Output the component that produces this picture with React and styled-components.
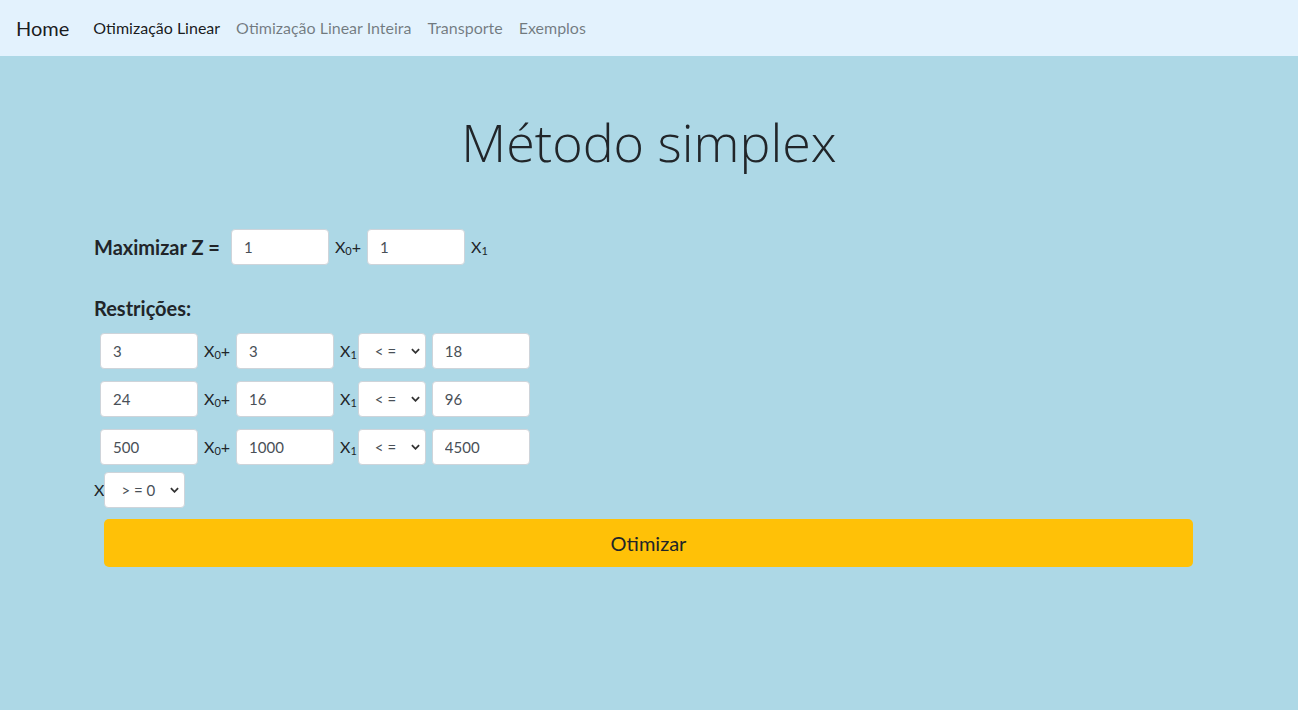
import React from 'react';
import styled, { createGlobalStyle } from 'styled-components';

const GlobalStyle = createGlobalStyle`
  html, body {
    margin: 0;
    padding: 0;
  }
  body {
    background: #add8e6;
    font-family: Lato, "Open Sans", sans-serif;
    font-size: 16px;
    line-height: 1.5;
    color: #212529;
  }
  * {
    box-sizing: border-box;
  }
`;

const Navbar = styled.nav`
  display: flex;
  align-items: center;
  height: 56px;
  padding: 0 16px;
  background: #e3f2fd;
`;

const Brand = styled.a`
  font-size: 20px;
  color: rgba(0, 0, 0, 0.9);
  margin-right: 16px;
  text-decoration: none;
`;

const NavLink = styled.a`
  padding: 8px;
  color: ${(p) => (p.$active ? 'rgba(0, 0, 0, 0.9)' : 'rgba(0, 0, 0, 0.5)')};
  text-decoration: none;
`;

const Container = styled.main`
  width: 1110px;
  margin: 0 auto;
`;

const Title = styled.h1`
  font-family: "Open Sans", sans-serif;
  font-weight: 300;
  font-size: 52px;
  line-height: 1.2;
  text-align: center;
  margin: 55px 0 50px;
`;

const Row = styled.div`
  display: flex;
  align-items: center;
`;

const Heading = styled.span`
  font-weight: 700;
  font-size: 20px;
  margin-right: 5px;
`;

const SectionTitle = styled.div`
  font-weight: 700;
  font-size: 20px;
  margin: 22px 0 4px;
`;

const NumInput = styled.input`
  width: 98px;
  height: 36px;
  margin: 6px;
  padding: 6px 12px;
  border: 1px solid #ced4da;
  border-radius: 4px;
  background: #fff;
  font: inherit;
  font-size: 15px;
  color: #495057;
`;

const Var = styled.span`
  font-size: 16px;
  sub {
    font-size: 11px;
    vertical-align: -2px;
  }
`;

const Select = styled.select`
  appearance: none;
  width: ${(p) => p.$width}px;
  height: 36px;
  margin: ${(p) => p.$margin};
  padding: 6px 20px 6px 16px;
  border: 1px solid #ced4da;
  border-radius: 4px;
  font: inherit;
  font-size: 15px;
  color: #495057;
  background: #fff
    url("data:image/svg+xml,%3csvg xmlns='http://www.w3.org/2000/svg' viewBox='0 0 10 6'%3e%3cpath d='M1 1l4 4 4-4' fill='none' stroke='%23333' stroke-width='2'/%3e%3c/svg%3e")
    no-repeat right 5px center / 9px 6px;
`;

const Button = styled.button`
  display: block;
  width: calc(100% - 21px);
  height: 48px;
  margin: 11px 11px 0 10px;
  border: 0;
  border-radius: 5px;
  background: #ffc107;
  font: inherit;
  font-size: 20px;
  color: #212529;
`;

const objective = ['1', '1'];
const constraints = [
  ['3', '3', '18'],
  ['24', '16', '96'],
  ['500', '1000', '4500'],
];

export default function App() {
  return (
    <>
      <GlobalStyle />
      <Navbar>
        <Brand href="#">Home</Brand>
        <NavLink href="#" $active>Otimização Linear</NavLink>
        <NavLink href="#">Otimização Linear Inteira</NavLink>
        <NavLink href="#">Transporte</NavLink>
        <NavLink href="#">Exemplos</NavLink>
      </Navbar>
      <Container>
        <Title>Método simplex</Title>
        <Row>
          <Heading>Maximizar Z =</Heading>
          <NumInput defaultValue={objective[0]} />
          <Var>X<sub>0</sub>+</Var>
          <NumInput defaultValue={objective[1]} />
          <Var>X<sub>1</sub></Var>
        </Row>
        <SectionTitle>Restrições:</SectionTitle>
        {constraints.map((c, i) => (
          <Row key={i}>
            <NumInput defaultValue={c[0]} />
            <Var>X<sub>0</sub>+</Var>
            <NumInput defaultValue={c[1]} />
            <Var>X<sub>1</sub></Var>
            <Select $width={68} $margin="6px 0 6px 1px" defaultValue="le">
              <option value="le">{'< ='}</option>
              <option value="ge">{'> ='}</option>
              <option value="eq">=</option>
            </Select>
            <NumInput defaultValue={c[2]} />
          </Row>
        ))}
        <Row>
          <Var>X</Var>
          <Select $width={81} $margin="1px 0 0 0" defaultValue="ge">
            <option value="ge">{'> = 0'}</option>
          </Select>
        </Row>
        <Button>Otimizar</Button>
      </Container>
    </>
  );
}
